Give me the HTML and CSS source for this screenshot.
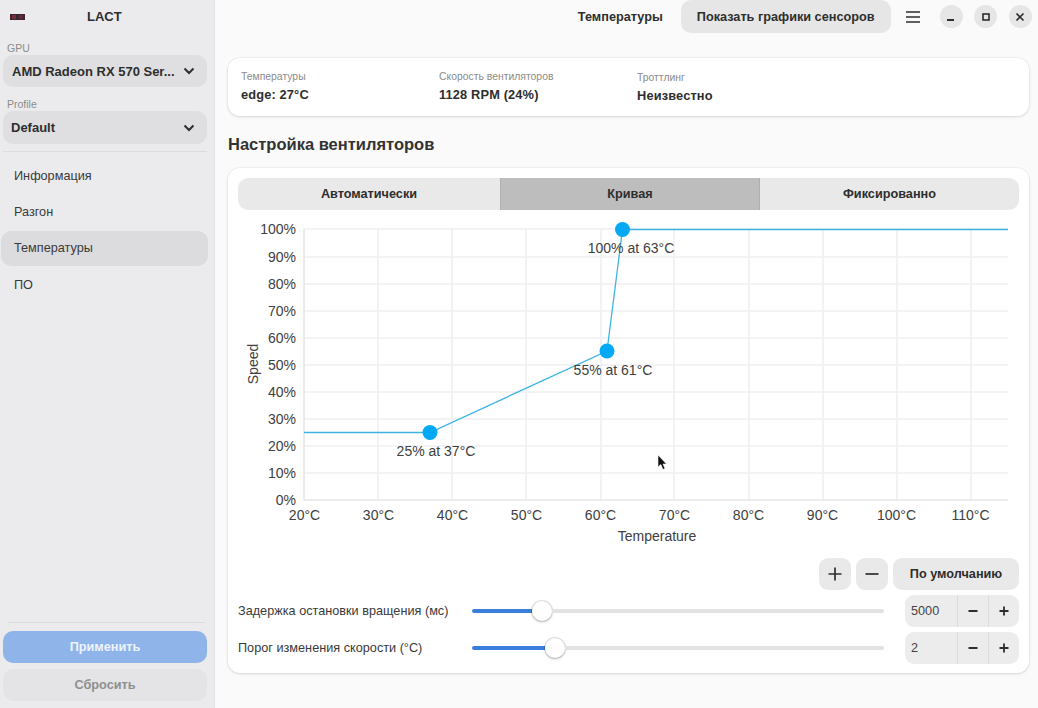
FILE: index.html
```html
<!DOCTYPE html>
<html>
<head>
  <title>LACT</title>
  <link rel="stylesheet" href="styles.css">
</head>
<body>
  <div class="window">
    <aside class="sidebar">
      <div class="side-head">
        <svg class="app-icon" width="16" height="8" viewBox="0 0 16 8">
          <rect x="0" y="1" width="15" height="6" fill="#3a2430"/>
          <rect x="2" y="2" width="4" height="4" fill="#7a2c3c"/>
          <rect x="9" y="2" width="4" height="4" fill="#5e2a3c"/>
        </svg>
        <span class="app-name">LACT</span>
      </div>
      <div class="side-label">GPU</div>
      <div class="dropdown gpu-drop">
        <span class="drop-text">AMD Radeon RX 570 Ser...</span>
        <svg class="chev" width="12" height="8" viewBox="0 0 12 8"><path d="M1.5 1.5 L6 6 L10.5 1.5" fill="none" stroke="#2e2e2e" stroke-width="2"/></svg>
      </div>
      <div class="side-label profile-label">Profile</div>
      <div class="dropdown profile-drop">
        <span class="drop-text">Default</span>
        <svg class="chev" width="12" height="8" viewBox="0 0 12 8"><path d="M1.5 1.5 L6 6 L10.5 1.5" fill="none" stroke="#2e2e2e" stroke-width="2"/></svg>
      </div>
      <div class="side-sep"></div>
      <nav class="nav">
        <div class="nav-item">Информация</div>
        <div class="nav-item">Разгон</div>
        <div class="nav-item active">Температуры</div>
        <div class="nav-item">ПО</div>
      </nav>
      <div class="side-foot">
        <div class="side-sep foot-sep"></div>
        <div class="btn-apply">Применить</div>
        <div class="btn-reset">Сбросить</div>
      </div>
    </aside>

    <main class="content">
      <header class="topbar">
        <span class="top-title">Температуры</span>
        <div class="top-btn">Показать графики сенсоров</div>
        <svg class="burger" width="14" height="12" viewBox="0 0 14 12"><path d="M0 1 H14 M0 6 H14 M0 11 H14" stroke="#2e2e2e" stroke-width="1.6"/></svg>
        <div class="win-btn"><svg width="10" height="10" viewBox="0 0 10 10"><rect x="1" y="7" width="7" height="2" fill="#2e2e2e"/></svg></div>
        <div class="win-btn"><svg width="10" height="10" viewBox="0 0 10 10"><rect x="2" y="2" width="6" height="6" fill="none" stroke="#2e2e2e" stroke-width="1.6"/></svg></div>
        <div class="win-btn"><svg width="10" height="10" viewBox="0 0 10 10"><path d="M1.5 1.5 L8.5 8.5 M8.5 1.5 L1.5 8.5" stroke="#2e2e2e" stroke-width="1.7"/></svg></div>
      </header>

      <section class="card stats">
        <div class="stat stat-temp">
          <div class="stat-label">Температуры</div>
          <div class="stat-value">edge: 27°C</div>
        </div>
        <div class="stat stat-fan">
          <div class="stat-label">Скорость вентиляторов</div>
          <div class="stat-value">1128 RPM (24%)</div>
        </div>
        <div class="stat stat-throttle">
          <div class="stat-label">Троттлинг</div>
          <div class="stat-value">Неизвестно</div>
        </div>
      </section>

      <h2 class="section-title">Настройка вентиляторов</h2>

      <section class="card fan-card">
        <div class="tabs">
          <div class="tab tab-first">Автоматически</div>
          <div class="tab selected">Кривая</div>
          <div class="tab">Фиксированно</div>
        </div>

        <svg class="chart" width="790" height="342" viewBox="238 215 790 342">
          <g stroke="#efeff2" stroke-width="1.600">
            <path d="M378 229 V500 M452 229 V500 M526 229 V500 M601 229 V500 M674 229 V500 M749 229 V500 M823 229 V500 M897 229 V500 M971 229 V500"/>
            <path d="M304 229 H1008 M304 257 H1008 M304 284 H1008 M304 311 H1008 M304 338 H1008 M304 365 H1008 M304 392 H1008 M304 419 H1008 M304 446 H1008 M304 473 H1008"/>
            <path d="M304 229 V500 M304 500 H1008" stroke="#e6e6ea"/>
          </g>
          <polyline points="304,432.5 430,432.5 607,351 622.500,229.500 1008,229.500" fill="none" stroke="#3fb4e4" stroke-width="1.300"/>
          <circle cx="430" cy="432.500" r="7.500" fill="#03a9f4"/>
          <circle cx="607" cy="351" r="7.500" fill="#03a9f4"/>
          <circle cx="622.500" cy="229.500" r="7.500" fill="#03a9f4"/>
          <g class="chart-text" text-anchor="end">
            <text x="296" y="234">100%</text>
            <text x="296" y="262">90%</text>
            <text x="296" y="289">80%</text>
            <text x="296" y="316">70%</text>
            <text x="296" y="343">60%</text>
            <text x="296" y="370">50%</text>
            <text x="296" y="397">40%</text>
            <text x="296" y="424">30%</text>
            <text x="296" y="451">20%</text>
            <text x="296" y="478">10%</text>
            <text x="296" y="505">0%</text>
          </g>
          <g class="chart-text" text-anchor="middle">
            <text x="304.500" y="520">20°C</text>
            <text x="378.500" y="520">30°C</text>
            <text x="452.500" y="520">40°C</text>
            <text x="526.500" y="520">50°C</text>
            <text x="600.500" y="520">60°C</text>
            <text x="674.500" y="520">70°C</text>
            <text x="748.500" y="520">80°C</text>
            <text x="822.500" y="520">90°C</text>
            <text x="896.500" y="520">100°C</text>
            <text x="970.500" y="520">110°C</text>
            <text x="657" y="541">Temperature</text>
            <text x="436" y="456">25% at 37°C</text>
            <text x="613" y="375">55% at 61°C</text>
            <text x="631" y="253">100% at 63°C</text>
            <text transform="translate(258 364) rotate(-90)">Speed</text>
          </g>
        </svg>

        <div class="curve-actions">
          <div class="small-btn"><svg width="14" height="14" viewBox="0 0 14 14"><path d="M7 0.500 V13.500 M0.500 7 H13.500" stroke="#2e2e2e" stroke-width="1.700"/></svg></div>
          <div class="small-btn"><svg width="14" height="14" viewBox="0 0 14 14"><path d="M0.500 7 H13.500" stroke="#2e2e2e" stroke-width="1.700"/></svg></div>
          <div class="default-btn">По умолчанию</div>
        </div>

        <div class="setting">
          <span class="setting-label">Задержка остановки вращения (мс)</span>
          <div class="slider">
            <div class="slider-fill fill-stop"></div>
            <div class="slider-knob"></div>
            <div class="slider-rest"></div>
          </div>
          <div class="spin">
            <span class="spin-value">5000</span>
            <span class="spin-btn"><svg width="10" height="10" viewBox="0 0 10 10"><path d="M0.500 5 H9.500" stroke="#2e2e2e" stroke-width="1.800"/></svg></span>
            <span class="spin-btn"><svg width="10" height="10" viewBox="0 0 10 10"><path d="M5 0.500 V9.500 M0.500 5 H9.500" stroke="#2e2e2e" stroke-width="1.800"/></svg></span>
          </div>
        </div>

        <div class="setting">
          <span class="setting-label">Порог изменения скорости (°C)</span>
          <div class="slider">
            <div class="slider-fill fill-step"></div>
            <div class="slider-knob"></div>
            <div class="slider-rest"></div>
          </div>
          <div class="spin">
            <span class="spin-value">2</span>
            <span class="spin-btn"><svg width="10" height="10" viewBox="0 0 10 10"><path d="M0.500 5 H9.500" stroke="#2e2e2e" stroke-width="1.800"/></svg></span>
            <span class="spin-btn"><svg width="10" height="10" viewBox="0 0 10 10"><path d="M5 0.500 V9.500 M0.500 5 H9.500" stroke="#2e2e2e" stroke-width="1.800"/></svg></span>
          </div>
        </div>
      </section>
    </main>
  </div>

  <!-- mouse pointer caught in the screenshot -->
  <svg class="cursor" width="11" height="17" viewBox="0 0 11 17"><path d="M1 1 V13 L3.800 10.500 L6 15.500 L8 14.500 L6 10 H9.500 Z" fill="#111" stroke="#fff" stroke-width="0.600"/></svg>
</body>
</html>
```

FILE: styles.css
```css
* {
  box-sizing: border-box;
}

html, body {
  margin: 0;
  padding: 0;
  height: 708px;
  overflow: hidden;
}

body {
  background: #fafafa;
  color: #2e2e2e;
  font-family: "Liberation Sans", Arial, sans-serif;
  font-size: 12.7px;
  position: relative;
}

.window {
  display: flex;
  height: 708px;
}

/* sidebar */
.sidebar {
  width: 215px;
  flex: none;
  display: flex;
  flex-direction: column;
  background: #ebebed;
  border-right: 1px solid #e2e2e4;
  padding: 0 7px 7px 3px;
}

.side-head {
  height: 33px;
  display: flex;
  align-items: center;
  position: relative;
  flex: none;
}

.app-icon {
  margin-left: 7px;
}

.app-name {
  font-size: 13px;
  font-weight: 700;
  margin-left: 61px;
}

.side-label {
  color: #8b8b8b;
  font-size: 10.5px;
  line-height: 13px;
  margin: 9px 0 0 4px;
  height: 13px;
}

.profile-label {
  margin-top: 11px;
}

.dropdown {
  height: 32px;
  background: #dfdfe1;
  border-radius: 10px;
  display: flex;
  align-items: center;
  justify-content: space-between;
  padding: 0 12px 0 9px;
  font-size: 13px;
  font-weight: 700;
  flex: none;
}

.profile-drop {
  height: 33px;
  padding-left: 8px;
}

.side-sep {
  height: 1px;
  background: #dcdcde;
  margin: 7px 0 6px;
  flex: none;
}

.nav {
  display: flex;
  flex-direction: column;
  gap: 2px;
  margin: 0.500px -1px 0 -2px;
}

.nav-item {
  height: 34.400px;
  display: flex;
  align-items: center;
  padding-left: 13px;
  border-radius: 10px;
  color: #3a3a3a;
}

.nav-item.active {
  background: #dcdcde;
}

.side-foot {
  margin-top: auto;
  display: flex;
  flex-direction: column;
}

.foot-sep {
  margin: 0 2px 8px 5px;
}

.btn-apply, .btn-reset {
  height: 32px;
  border-radius: 10px;
  display: flex;
  align-items: center;
  justify-content: center;
  font-weight: 700;
}

.btn-apply {
  background: #8fb4ea;
  color: #edf3fc;
}

.btn-reset {
  background: #e4e4e6;
  color: #8f8f8f;
  margin-top: 6px;
}

/* main column */
.content {
  flex: 1;
  min-width: 0;
  padding: 0 9px 0 13px;
  display: flex;
  flex-direction: column;
}

.topbar {
  height: 33px;
  flex: none;
  display: flex;
  align-items: center;
  justify-content: flex-end;
  margin-right: -9px;
}

.top-title {
  font-weight: 700;
  margin-right: 18px;
}

.top-btn {
  height: 33px;
  background: #e6e6e6;
  border-radius: 10px;
  padding: 0 16px;
  display: flex;
  align-items: center;
  font-weight: 700;
}

.burger {
  margin: 0 20px 0 15px;
}

.win-btn {
  width: 23px;
  height: 23px;
  border-radius: 50%;
  background: #e6e6e6;
  display: flex;
  align-items: center;
  justify-content: center;
  margin-right: 11.500px;
}

.win-btn:last-child {
  margin-right: 6.500px;
}

.card {
  background: #fff;
  border-radius: 12px;
  box-shadow: 0 0 0 1px rgba(0, 0, 0, 0.03), 0 1px 3px rgba(0, 0, 0, 0.12);
}

.stats {
  margin-top: 25px;
  height: 58px;
  display: flex;
  flex: none;
  padding: 0 13px;
}

.stat-label {
  color: #8b8b8b;
  font-size: 10.4px;
  line-height: 13px;
  margin-top: 12px;
}

.stat-value {
  font-size: 12.8px;
  font-weight: 700;
  line-height: 15px;
  margin-top: 4px;
  letter-spacing: 0.15px;
}

.stat-temp {
  width: 198px;
}

.stat-fan {
  width: 198px;
}

.stat-throttle {
  padding-top: 1px;
}

.section-title {
  font-size: 16.5px;
  line-height: 20px;
  font-weight: 700;
  margin: 18px 0 15px;
  color: #333;
  height: 19px;
}

.fan-card {
  height: 505px;
  flex: none;
  padding: 10px 10px 0;
  display: flex;
  flex-direction: column;
}

.tabs {
  display: flex;
  height: 32px;
  flex: none;
  border-radius: 10px;
  overflow: hidden;
  background: #e9e9e9;
}

.tab {
  flex: 1;
  display: flex;
  align-items: center;
  justify-content: center;
  font-weight: 700;
}

.tab.tab-first {
  flex: none;
  width: 262px;
}

.tab.selected {
  background: #bdbdbd;
  flex: none;
  width: 260px;
  border-left: 1px solid #b0b0b0;
  border-right: 1px solid #b0b0b0;
}

.chart {
  display: block;
  flex: none;
  margin-top: 5px;
}

.chart-text text {
  font-size: 14px;
  fill: #404040;
}

.curve-actions {
  display: flex;
  justify-content: flex-end;
  gap: 5px;
  margin-top: 1px;
  flex: none;
}

.small-btn {
  width: 32px;
  height: 32px;
  border-radius: 9px;
  background: #e9e9e9;
  display: flex;
  align-items: center;
  justify-content: center;
}

.default-btn {
  width: 126px;
  height: 32px;
  border-radius: 9px;
  background: #e9e9e9;
  display: flex;
  align-items: center;
  justify-content: center;
  font-weight: 700;
}

.setting {
  display: flex;
  align-items: center;
  height: 32px;
  margin-top: 5px;
  flex: none;
}

.setting-label {
  width: 234px;
  flex: none;
  color: #3a3a3a;
}

.slider {
  width: 412px;
  flex: none;
  display: flex;
  align-items: center;
}

.slider-fill {
  height: 4px;
  background: #3a7fdc;
  border-radius: 2px 0 0 2px;
}

.fill-stop {
  width: 60px;
}

.fill-step {
  width: 73px;
}

.slider-knob {
  width: 20px;
  height: 20px;
  flex: none;
  border-radius: 50%;
  background: #fff;
  box-shadow: 0 0 0 1px rgba(0, 0, 0, 0.1), 0 1px 3px rgba(0, 0, 0, 0.25);
}

.slider-rest {
  flex: 1;
  height: 4px;
  background: #e2e2e2;
  border-radius: 0 2px 2px 0;
}

.spin {
  margin-left: 21px;
  width: 114px;
  height: 32px;
  flex: none;
  display: flex;
  background: #ececec;
  border-radius: 9px;
  overflow: hidden;
}

.spin-value {
  flex: 1;
  display: flex;
  align-items: center;
  padding-left: 6px;
  color: #444;
}

.spin-btn {
  width: 31px;
  display: flex;
  align-items: center;
  justify-content: center;
  border-left: 1px solid #dcdcdc;
}

/* pointer sits over everything */
.cursor {
  position: absolute;
  left: 657px;
  top: 454px;
}
```
